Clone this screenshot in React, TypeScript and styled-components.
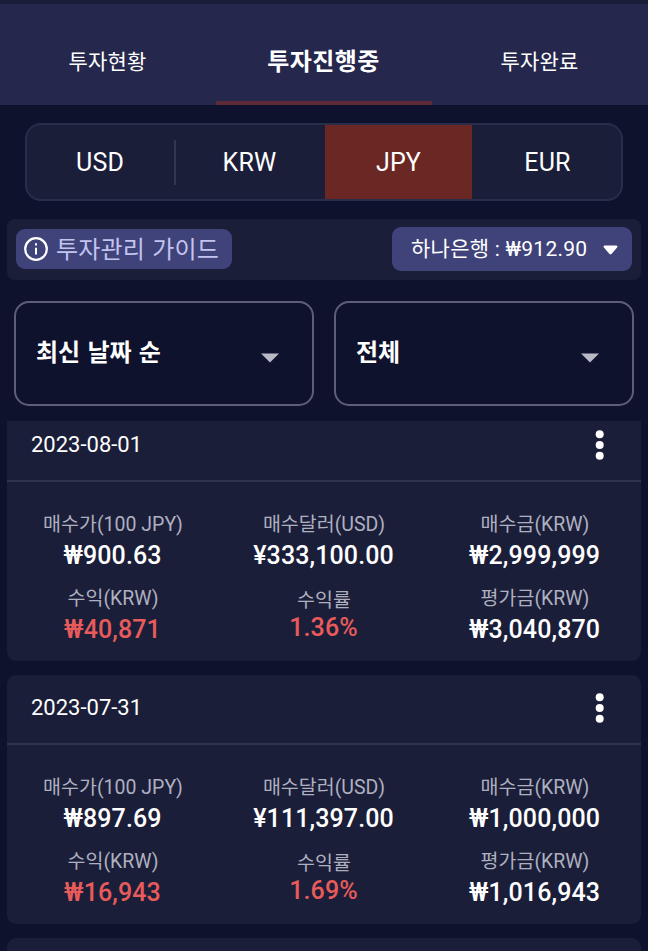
import React from "react";
import styled, { createGlobalStyle } from "styled-components";

const GlobalStyle = createGlobalStyle`
  * { box-sizing: border-box; }
  body {
    margin: 0;
    background: #0f122d;
    color: #fff;
    font-family: Roboto, "Noto Sans CJK KR", sans-serif;
  }
  button {
    font: inherit;
    color: inherit;
    background: none;
    border: 0;
    padding: 0;
    margin: 0;
  }
`;

const Screen = styled.div`
  display: flex;
  flex-direction: column;
  width: 648px;
  height: 951px;
  overflow: hidden;
  background: #0f122d;
`;

const Tabs = styled.nav`
  display: grid;
  grid-template-columns: repeat(3, 1fr);
  flex: none;
  height: 105px;
  border-top: 4px solid #1b1e39;
  background: #25274d;
`;

const Tab = styled.button<{ $active?: boolean }>`
  display: flex;
  align-items: center;
  justify-content: center;
  padding-top: ${(p) => (p.$active ? 13 : 14)}px;
  padding-right: 1px;
  border-bottom: 4px solid ${(p) => (p.$active ? "#5e2a35" : "transparent")};
  font-size: ${(p) => (p.$active ? 24 : 21)}px;
  font-weight: ${(p) => (p.$active ? 700 : 400)};
  letter-spacing: ${(p) => (p.$active ? 0.4 : 0.2)}px;
`;

const Segments = styled.div`
  display: grid;
  grid-template-columns: 149px 149px 147px 1fr;
  flex: none;
  height: 78px;
  margin: 18px 25px 0;
  border: 2px solid #2a2d49;
  border-radius: 16px;
  background: #1b1e39;
  overflow: hidden;
`;

const Segment = styled.button<{ $active?: boolean; $divider?: boolean }>`
  display: flex;
  align-items: center;
  justify-content: center;
  font-size: 25px;
  letter-spacing: 0.2px;
  background: ${(p) => (p.$active ? "#6b2723" : "transparent")};
  &:first-child {
    justify-content: space-between;
    padding-left: 49px;
  }
  &:nth-child(2) {
    padding-right: 2px;
  }
  &:last-child {
    padding-left: 2px;
  }
  &::after {
    content: "";
    display: ${(p) => (p.$divider ? "block" : "none")};
    width: 2px;
    height: 45px;
    background: #33364f;
  }
`;

const InfoBar = styled.div`
  display: flex;
  align-items: center;
  justify-content: space-between;
  flex: none;
  height: 61px;
  margin: 18px 7px 0;
  padding: 0 9px 1px;
  border-radius: 8px;
  background: #1b1e39;
`;

const GuideChip = styled.button`
  display: flex;
  align-items: center;
  gap: 8px;
  width: 216px;
  height: 40px;
  padding-left: 8px;
  border-radius: 9px;
  background: #40437a;
  color: #c3c4ef;
  font-size: 24px;
  white-space: nowrap;
`;

const GuideText = styled.span`
  padding-bottom: 3px;
  letter-spacing: 0.2px;
  word-spacing: 1px;
`;

const BankChip = styled.button`
  display: flex;
  align-items: center;
  justify-content: space-between;
  width: 240px;
  height: 44px;
  padding: 0 14px 0 19px;
  border-radius: 9px;
  background: #40437a;
  white-space: nowrap;
`;

const BankText = styled.span`
  padding-bottom: 4px;
  font-size: 21px;
  letter-spacing: 0.25px;
`;

const Filters = styled.div`
  display: grid;
  grid-template-columns: 1fr 1fr;
  gap: 20px;
  flex: none;
  height: 105px;
  margin: 21px 14px 15px;
`;

const Select = styled.button`
  display: flex;
  align-items: center;
  justify-content: space-between;
  padding: 0 34px 6px 20px;
  border: 2px solid #5d5f77;
  border-radius: 15px;
  font-size: 24px;
  font-weight: 700;
  word-spacing: 1.3px;
`;

const SelectArrow = styled.svg`
  width: 18px;
  height: 10px;
  margin: 14px -1px 0 0;
`;

const List = styled.main`
  flex: 1;
  min-height: 0;
  padding: 0 7px;
  overflow: hidden;
`;

const Cards = styled.div`
  display: flex;
  flex-direction: column;
  gap: 14px;
  margin-top: -9px;
`;

const Card = styled.article`
  flex: none;
  height: 249px;
  border-radius: 9px;
  background: #1b1e39;
`;

const CardHeader = styled.header`
  display: flex;
  align-items: center;
  justify-content: space-between;
  height: 70px;
  padding: 0 35px 4px 24px;
  border-bottom: 2px solid #30334d;
  font-size: 22px;
`;

const Stats = styled.div`
  display: grid;
  grid-template-columns: repeat(3, 211px);
  grid-auto-rows: 74px;
  padding-top: 29px;
`;

const Stat = styled.div<{ $tight?: boolean }>`
  display: flex;
  flex-direction: column;
  align-items: center;
  padding-top: ${(p) => (p.$tight ? 2 : 0)}px;
  gap: ${(p) => (p.$tight ? 0 : 3)}px;
  white-space: nowrap;
`;

const Label = styled.span`
  padding-left: 1px;
  color: #aeb0c0;
  font-size: 19.5px;
  line-height: 28px;
`;

const Value = styled.strong<{ $gain?: boolean; $raised?: boolean }>`
  color: ${(p) => (p.$gain ? "#e85b5b" : "#fff")};
  font-size: 25px;
  font-weight: 500;
  letter-spacing: 0.1px;
  line-height: ${(p) => (p.$raised ? 26 : 28)}px;
`;

const InfoIcon = () => (
  <svg width="24" height="24" viewBox="0 0 24 24" fill="none" stroke="#fff" strokeWidth="2.2">
    <circle cx="12" cy="12" r="10.8" />
    <path d="M12 10.7v6.8M12 6.3v2.3" strokeWidth="2" />
  </svg>
);

const BankArrow = () => (
  <svg width="15" height="12" viewBox="0 -2 15 12" fill="#fff">
    <path d="M1.8.5h11.4c1.2 0 1.7 1.2.9 2L8.7 8.7c-.7.7-1.7.7-2.4 0L.9 2.5C.1 1.7.6.5 1.8.5Z" />
  </svg>
);

const Dots = () => (
  <svg width="12" height="32" viewBox="0 -2 12 32" fill="#fff">
    <circle cx="5.7" cy="4.2" r="4" />
    <circle cx="5.7" cy="15" r="4" />
    <circle cx="5.7" cy="25.8" r="4" />
  </svg>
);

type Entry = {
  date: string;
  price: string;
  amount: string;
  cost: string;
  profit: string;
  rate: string;
  worth: string;
};

const entries: Entry[] = [
  {
    date: "2023-08-01",
    price: "₩900.63",
    amount: "¥333,100.00",
    cost: "₩2,999,999",
    profit: "₩40,871",
    rate: "1.36%",
    worth: "₩3,040,870",
  },
  {
    date: "2023-07-31",
    price: "₩897.69",
    amount: "¥111,397.00",
    cost: "₩1,000,000",
    profit: "₩16,943",
    rate: "1.69%",
    worth: "₩1,016,943",
  },
];

const EntryCard = ({ entry }: { entry: Entry }) => (
  <Card>
    <CardHeader>
      <span>{entry.date}</span>
      <Dots />
    </CardHeader>
    <Stats>
      <Stat>
        <Label>매수가(100 JPY)</Label>
        <Value>{entry.price}</Value>
      </Stat>
      <Stat>
        <Label>매수달러(USD)</Label>
        <Value>{entry.amount}</Value>
      </Stat>
      <Stat>
        <Label>매수금(KRW)</Label>
        <Value>{entry.cost}</Value>
      </Stat>
      <Stat>
        <Label>수익(KRW)</Label>
        <Value $gain>{entry.profit}</Value>
      </Stat>
      <Stat $tight>
        <Label>수익률</Label>
        <Value $gain $raised>{entry.rate}</Value>
      </Stat>
      <Stat>
        <Label>평가금(KRW)</Label>
        <Value>{entry.worth}</Value>
      </Stat>
    </Stats>
  </Card>
);

const Dropdown = ({ label }: { label: string }) => (
  <Select>
    {label}
    <SelectArrow viewBox="0 0 18 10" fill="#b9bac5">
      <path d="M0 .5h18L9 9.5Z" />
    </SelectArrow>
  </Select>
);

export default function App() {
  return (
    <>
      <GlobalStyle />
      <Screen>
        <Tabs>
          <Tab>투자현황</Tab>
          <Tab $active>투자진행중</Tab>
          <Tab>투자완료</Tab>
        </Tabs>
        <Segments>
          <Segment $divider>USD</Segment>
          <Segment>KRW</Segment>
          <Segment $active>JPY</Segment>
          <Segment>EUR</Segment>
        </Segments>
        <InfoBar>
          <GuideChip>
            <InfoIcon />
            <GuideText>투자관리 가이드</GuideText>
          </GuideChip>
          <BankChip>
            <BankText>하나은행 : ₩912.90</BankText>
            <BankArrow />
          </BankChip>
        </InfoBar>
        <Filters>
          <Dropdown label="최신 날짜 순" />
          <Dropdown label="전체" />
        </Filters>
        <List>
          <Cards>
            {entries.map((entry) => (
              <EntryCard key={entry.date} entry={entry} />
            ))}
            <Card />
          </Cards>
        </List>
      </Screen>
    </>
  );
}
